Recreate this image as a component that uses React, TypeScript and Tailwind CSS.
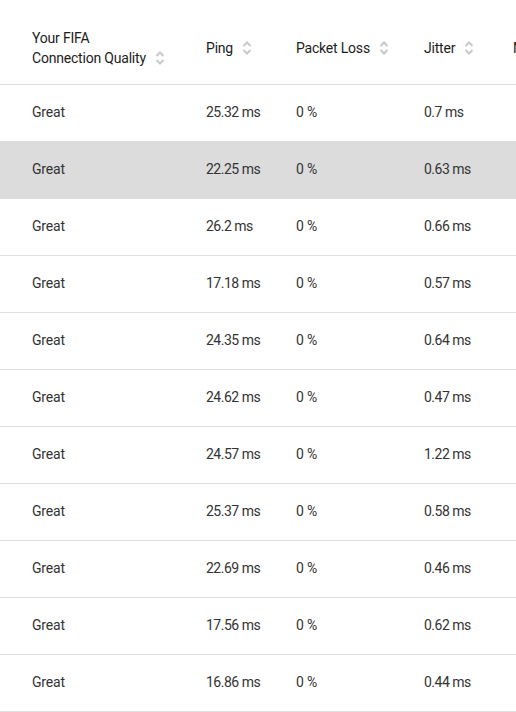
import React from "react";

const rows = [
  ["25.32 ms", "0 %", "0.7 ms"],
  ["22.25 ms", "0 %", "0.63 ms"],
  ["26.2 ms", "0 %", "0.66 ms"],
  ["17.18 ms", "0 %", "0.57 ms"],
  ["24.35 ms", "0 %", "0.64 ms"],
  ["24.62 ms", "0 %", "0.47 ms"],
  ["24.57 ms", "0 %", "1.22 ms"],
  ["25.37 ms", "0 %", "0.58 ms"],
  ["22.69 ms", "0 %", "0.46 ms"],
  ["17.56 ms", "0 %", "0.62 ms"],
  ["16.86 ms", "0 %", "0.44 ms"],
];

function Sort() {
  return (
    <svg width="10" height="16" viewBox="0 0 10 16" className="shrink-0">
      <path d="M1.5 6 L5 2.5 L8.5 6" fill="none" stroke="#c9c9c9" strokeWidth="2" />
      <path d="M1.5 10 L5 13.5 L8.5 10" fill="none" stroke="#c9c9c9" strokeWidth="2" />
    </svg>
  );
}

export default function App() {
  return (
    <div
      className="w-[516px] h-[712px] overflow-hidden bg-white text-[14px] text-[#333] tracking-[-0.2px]"
      style={{ fontFamily: "Roboto, 'Liberation Sans', sans-serif" }}
    >
      <div className="flex h-[85px] pt-[12px] border-b border-[#dedede] text-[#1c1c1c]">
        <div className="w-[206px] pl-[32px] flex items-center gap-[9px] shrink-0">
          <div className="leading-[20px]">
            Your FIFA
            <br />
            Connection Quality
          </div>
          <div className="pt-[20px]">
            <Sort />
          </div>
        </div>
        <div className="w-[90px] flex items-center gap-[9px] shrink-0">
          <span>Ping</span>
          <Sort />
        </div>
        <div className="w-[128px] flex items-center gap-[9px] shrink-0">
          <span>Packet Loss</span>
          <Sort />
        </div>
        <div className="w-[89px] flex items-center gap-[9px] shrink-0">
          <span>Jitter</span>
          <Sort />
        </div>
        <div className="flex items-center shrink-0 whitespace-nowrap">
          <span>Max</span>
        </div>
      </div>
      {rows.map((r, i) => (
        <div
          key={i}
          className={
            "flex h-[57px] pb-[1px] border-b items-center " +
            (i === 1 ? "bg-[#dcdcdc] border-[#dcdcdc]" : "border-[#dedede]")
          }
        >
          <div className="w-[206px] pl-[32px] shrink-0">Great</div>
          <div className="w-[90px] shrink-0 tracking-[-0.5px]">{r[0]}</div>
          <div className="w-[128px] shrink-0">{r[1]}</div>
          <div className="w-[89px] shrink-0 tracking-[-0.5px]">{r[2]}</div>
        </div>
      ))}
    </div>
  );
}
